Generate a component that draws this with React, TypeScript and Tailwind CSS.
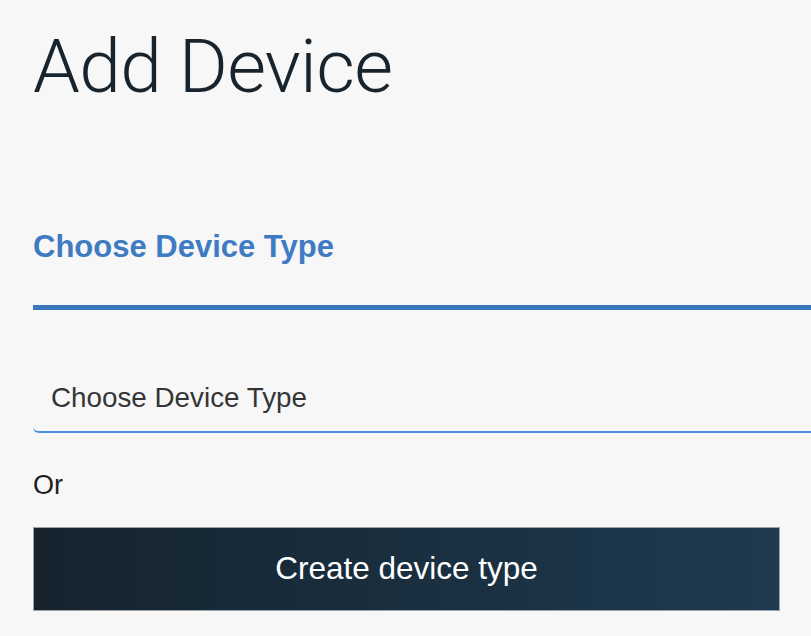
export default function App() {
  return (
    <div
      className="min-h-[636px] w-full overflow-hidden bg-[#f7f7f7] pl-[33px]"
      style={{ fontFamily: '"Liberation Sans", Arial, sans-serif' }}
    >
      <h1
        className="pt-[29px] text-[75px] leading-[75px] font-light tracking-[-0.7px] text-[#17232d]"
        style={{ fontFamily: 'Roboto, "Liberation Sans", sans-serif' }}
      >
        Add Device
      </h1>
      <div className="mt-[128px] text-[31px] leading-[30px] font-bold text-[#3f7bc3]">
        Choose Device Type
      </div>
      <div className="mt-[43px] h-[5px] bg-[#3a77bd]" />
      <div className="mt-[50px] rounded-bl-[6px] border-b-2 border-[#4a8fe0] pt-[24px] pb-[20px] pl-[18px] text-[27.8px] leading-[27px] text-[#353535]">
        Choose Device Type
      </div>
      <div className="mt-[39px] text-[27px] leading-[27px] text-[#1e1e1e]">Or</div>
      <button className="mt-[28px] flex h-[84px] w-[747px] items-center justify-center border border-[#9aa4ad] bg-linear-to-r from-[#15232e] to-[#1e3a50] text-[31.5px] text-white">
        Create device type
      </button>
    </div>
  );
}
